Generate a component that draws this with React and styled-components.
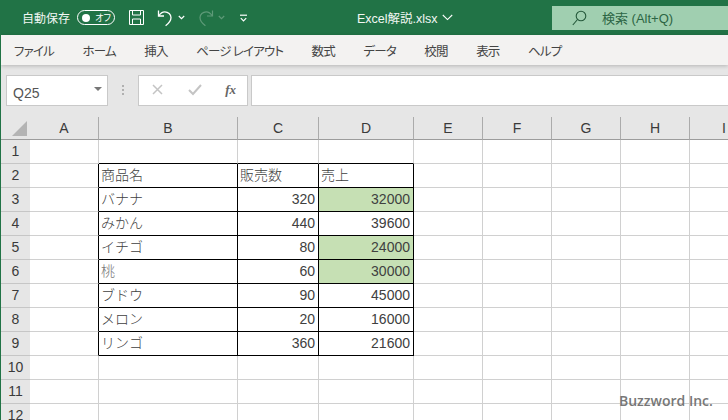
import React from 'react';
import styled, {createGlobalStyle} from 'styled-components';

const columns = [
    {name: 'A', width: 69},
    {name: 'B', width: 139},
    {name: 'C', width: 81},
    {name: 'D', width: 95},
    {name: 'E', width: 69},
    {name: 'F', width: 69},
    {name: 'G', width: 69},
    {name: 'H', width: 69},
    {name: 'I', width: 69},
];

const rowNumbers = [1, 2, 3, 4, 5, 6, 7, 8, 9, 10, 11, 12];

const tabs = ['ファイル', 'ホーム', '挿入', 'ページ レイアウト', '数式', 'データ', '校閲', '表示', 'ヘルプ'];

// rows 2 to 9 of the sheet, columns B to D
const tableRows = [
    ['商品名', '販売数', '売上'],
    ['バナナ', 320, 32000],
    ['みかん', 440, 39600],
    ['イチゴ', 80, 24000],
    ['桃', 60, 30000],
    ['ブドウ', 90, 45000],
    ['メロン', 20, 16000],
    ['リンゴ', 360, 21600],
];
const filledRows = [3, 5, 6];

const inTable = (col, row) => col >= 1 && col <= 3 && row >= 2 && row <= 9;

function App() {
    return (
        <>
            <GlobalStyle />
            <Page>
                <TitleBar>
                    <AutoSave>自動保存</AutoSave>
                    <Toggle>
                        <ToggleDot />
                        <ToggleText>オフ</ToggleText>
                    </Toggle>
                    <SaveIcon width="17" height="17" viewBox="0 0 17 17" fill="none" stroke="#fff" strokeWidth="1">
                        <path d="M1.5 1.5h14v14h-14z" />
                        <path d="M4.5 1.5v4.5h8v-4.5M4.5 15.5v-5.5h8v5.5" />
                    </SaveIcon>
                    <UndoIcon width="17" height="18" viewBox="0 0 17 18" fill="none" stroke="#fff" strokeWidth="1.3">
                        <path d="M1.5 1.5v5.5h5.5" />
                        <path d="M1.8 6.8c1.6-2.6 3.6-4 6-4 3.4 0 6.2 2.6 6.2 5.8 0 3-1.6 5.4-5.4 8.2" />
                    </UndoIcon>
                    <Caret width="7" height="5" viewBox="0 0 7 5" fill="none" stroke="#fff" strokeWidth="1.2">
                        <path d="M.8 1l2.7 2.6L6.2 1" />
                    </Caret>
                    <RedoIcon width="17" height="18" viewBox="0 0 17 18" fill="none" stroke="#5e9a78" strokeWidth="1.2">
                        <path d="M15.5 1.5v5.5h-5.5" />
                        <path d="M15.2 6.8c-1.6-2.6-3.6-4-6-4-3.4 0-6.2 2.6-6.2 5.8 0 3 1.6 5.4 5.4 8.2" />
                    </RedoIcon>
                    <Caret width="7" height="5" viewBox="0 0 7 5" fill="none" stroke="#5e9a78" strokeWidth="1.2">
                        <path d="M.8 1l2.7 2.6L6.2 1" />
                    </Caret>
                    <QuickAccess width="7" height="8" viewBox="0 0 7 8" fill="none" stroke="#fff" strokeWidth="1.2">
                        <path d="M0 1.2h7" />
                        <path d="M.8 4.2l2.7 2.7 2.7-2.7" />
                    </QuickAccess>
                    <FileName>Excel解説.xlsx</FileName>
                    <FileCaret width="11" height="7" viewBox="0 0 11 7" fill="none" stroke="#fff" strokeWidth="1.1">
                        <path d="M.8 1l4.7 4.6L10.2 1" />
                    </FileCaret>
                    <SearchBox>
                        <svg width="15" height="16" viewBox="0 0 15 16" fill="none" stroke="#24583a" strokeWidth="1.1">
                            <circle cx="9" cy="6" r="4.8" />
                            <path d="M5.5 9.5L.8 15" />
                        </svg>
                        <SearchText>検索 (Alt+Q)</SearchText>
                    </SearchBox>
                </TitleBar>

                <Ribbon>
                    {tabs.map((tab) => <Tab key={tab}>{tab}</Tab>)}
                </Ribbon>

                <FormulaBar>
                    <NameBox>
                        Q25
                        <NameArrow />
                    </NameBox>
                    <Grip>
                        <span></span>
                        <span></span>
                        <span></span>
                    </Grip>
                    <FormulaButtons>
                        <svg width="13" height="13" viewBox="0 0 13 13" fill="none" stroke="#c4c4c4" strokeWidth="1.5">
                            <path d="M2 2l9 9M11 2l-9 9" />
                        </svg>
                        <svg width="14" height="13" viewBox="0 0 14 13" fill="none" stroke="#c4c4c4" strokeWidth="2">
                            <path d="M1 7l4 4 8-9" />
                        </svg>
                        <FxLabel>fx</FxLabel>
                    </FormulaButtons>
                    <FormulaInput />
                </FormulaBar>

                <Sheet>
                    <Corner>
                        <svg width="15" height="15" viewBox="0 0 15 15">
                            <path d="M15 0v15H0z" fill="#b4b4b4" />
                        </svg>
                    </Corner>
                    {columns.map((col) => <ColHeader key={col.name}>{col.name}</ColHeader>)}
                    {rowNumbers.map((row) => (
                        <React.Fragment key={row}>
                            <RowHeader>{row}</RowHeader>
                            {columns.map((col, c) => {
                                const value = inTable(c, row) ? tableRows[row - 2][c - 1] : null;
                                return (
                                    <Cell
                                        key={col.name}
                                        $right={inTable(c, row) || inTable(c + 1, row)}
                                        $bottom={inTable(c, row) || inTable(c, row + 1)}
                                        $number={typeof value === 'number'}
                                        $filled={c === 3 && filledRows.includes(row)}
                                        $muted={value === '桃'}
                                    >
                                        {value}
                                    </Cell>
                                );
                            })}
                        </React.Fragment>
                    ))}
                </Sheet>

                <Watermark>Buzzword Inc.</Watermark>
            </Page>
        </>
    );
}

const GlobalStyle = createGlobalStyle`
    html, body {
        margin: 0;
        padding: 0;
        background: #fff;
    }
    body {
        font-family: "Liberation Sans", "Noto Sans CJK JP", sans-serif;
    }
`;

const Page = styled.div`
    position: relative;
    width: 728px;
    height: 420px;
    overflow: hidden;
    display: flex;
    flex-direction: column;
    box-sizing: border-box;
    border-left: 1px solid #217346;
`;

const TitleBar = styled.div`
    height: 35px;
    flex: none;
    margin-left: -1px;
    background: #217346;
    display: flex;
    align-items: center;
    padding-left: 22px;
    color: #fff;
    svg {
        flex: none;
    }
`;

const AutoSave = styled.span`
    font: 12px "Noto Sans CJK JP", sans-serif;
    width: 48px;
    flex: none;
    white-space: nowrap;
    color: #f2f7f4;
`;

const Toggle = styled.div`
    width: 38px;
    height: 15px;
    margin-left: 7px;
    flex: none;
    box-sizing: border-box;
    border: 1px solid #fff;
    border-radius: 8px;
    display: flex;
    align-items: center;
    padding: 0 3px 0 4px;
    justify-content: space-between;
`;

const ToggleDot = styled.span`
    width: 8px;
    height: 8px;
    border-radius: 50%;
    background: #fff;
`;

const ToggleText = styled.span`
    font: 9px "Noto Sans CJK JP", sans-serif;
    font-feature-settings: "palt";
    line-height: 1;
    color: #fff;
`;

const SaveIcon = styled.svg`
    margin-left: 13px;
`;

const UndoIcon = styled.svg`
    margin-left: 12px;
`;

const Caret = styled.svg`
    margin-left: 4px;
`;

const RedoIcon = styled.svg`
    margin-left: 12px;
`;

const QuickAccess = styled.svg`
    margin-left: 15px;
`;

const FileName = styled.span`
    margin-left: 110px;
    width: 81px;
    flex: none;
    font: 12.5px "Liberation Sans", "Noto Sans CJK JP", sans-serif;
    font-feature-settings: "palt";
    white-space: nowrap;
    color: #f2f7f4;
`;

const FileCaret = styled.svg`
    margin-left: 4px;
`;

const SearchBox = styled.div`
    margin-left: 99px;
    width: 176px;
    height: 24px;
    flex: none;
    background: #a0cfb0;
    display: flex;
    align-items: center;
    padding-left: 20px;
    box-sizing: border-box;
    gap: 15px;
`;

const SearchText = styled.span`
    font: 13px "Liberation Sans", "Noto Sans CJK JP", sans-serif;
    color: #2c6544;
    white-space: nowrap;
`;

const Ribbon = styled.div`
    height: 30px;
    flex: none;
    background: #f3f2f1;
    display: flex;
    align-items: center;
    padding-left: 13px;
    gap: 28.4px;
    position: relative;
    box-shadow: 0 1px 4px rgba(0, 0, 0, 0.22);
`;

const Tab = styled.span`
    font: 12.5px "Noto Sans CJK JP", sans-serif;
    font-feature-settings: "palt";
    letter-spacing: -0.8px;
    color: #444;
    white-space: nowrap;
`;

const FormulaBar = styled.div`
    height: 52px;
    flex: none;
    background: #e6e6e6;
    display: flex;
    align-items: flex-start;
    padding: 10px 0 0 5px;
    box-sizing: border-box;
`;

const NameBox = styled.div`
    width: 102px;
    height: 31px;
    box-sizing: border-box;
    background: #fff;
    border: 1px solid #c9c9c9;
    font-size: 14px;
    color: #555;
    display: flex;
    align-items: center;
    justify-content: space-between;
    padding: 5px 5px 0 6px;
`;

const NameArrow = styled.span`
    width: 0;
    height: 0;
    margin-top: -8px;
    border-left: 4px solid transparent;
    border-right: 4px solid transparent;
    border-top: 4px solid #777;
`;

const Grip = styled.div`
    width: 30px;
    height: 31px;
    flex: none;
    display: flex;
    flex-direction: column;
    align-items: center;
    gap: 2px;
    padding-top: 10px;
    box-sizing: border-box;
    span {
        width: 2px;
        height: 2px;
        background: #b0b0b0;
    }
`;

const FormulaButtons = styled.div`
    width: 110px;
    height: 31px;
    flex: none;
    box-sizing: border-box;
    background: #fff;
    border: 1px solid #c9c9c9;
    display: flex;
    align-items: center;
    justify-content: space-between;
    padding: 0 11px 2px 12px;
`;

const FxLabel = styled.span`
    font: italic bold 13px "Liberation Serif", serif;
    color: #666;
`;

const FormulaInput = styled.div`
    flex: 1;
    height: 31px;
    margin-left: 3px;
    box-sizing: border-box;
    background: #fff;
    border: 1px solid #c9c9c9;
    border-right: 0;
`;

const Sheet = styled.div`
    flex: 1;
    display: grid;
    grid-template-columns: 29px ${columns.map((c) => `${c.width}px`).join(' ')};
    grid-template-rows: 23px repeat(12, 24px);
    font-size: 14px;
    color: #333;
`;

const Corner = styled.div`
    background: #e6e6e6;
    border-right: 1px solid #a8a8a8;
    border-bottom: 1px solid #9c9c9c;
    box-sizing: content-box;
    margin-right: -1px;
    display: flex;
    align-items: flex-end;
    justify-content: flex-end;
    padding: 0 3px 3px 0;
`;

const ColHeader = styled.div`
    background: #e6e6e6;
    box-sizing: border-box;
    border-right: 1px solid #ababab;
    border-bottom: 1px solid #9c9c9c;
    display: flex;
    align-items: center;
    justify-content: center;
    padding-bottom: 1px;
    color: #3a3a3a;
`;

const RowHeader = styled.div`
    background: #e6e6e6;
    box-sizing: border-box;
    margin-right: -1px;
    border-right: 1px solid #a8a8a8;
    border-bottom: 1px solid #c6c6c6;
    display: flex;
    align-items: center;
    justify-content: center;
    padding-bottom: 1px;
    color: #3a3a3a;
`;

const Cell = styled.div`
    box-sizing: border-box;
    border-right: 1px solid ${(p) => (p.$right ? '#000' : '#d0d0d0')};
    border-bottom: 1px solid ${(p) => (p.$bottom ? '#000' : '#d0d0d0')};
    background: ${(p) => (p.$filled ? '#c6e0b4' : '#fff')};
    color: ${(p) => (p.$muted ? '#777' : '#404040')};
    font-family: ${(p) => (p.$number ? '"Liberation Sans"' : '"Noto Sans CJK JP"')}, sans-serif;
    font-weight: ${(p) => (p.$number ? 400 : 300)};
    display: flex;
    align-items: center;
    justify-content: ${(p) => (p.$number ? 'flex-end' : 'flex-start')};
    padding: 0 3px ${(p) => (p.$number ? '1px' : '3px')} 2px;
    white-space: nowrap;
`;

const Watermark = styled.div`
    position: absolute;
    left: 618px;
    top: 391px;
    font: 600 14px "Open Sans", sans-serif;
    color: #777;
    white-space: nowrap;
`;

export default App;
